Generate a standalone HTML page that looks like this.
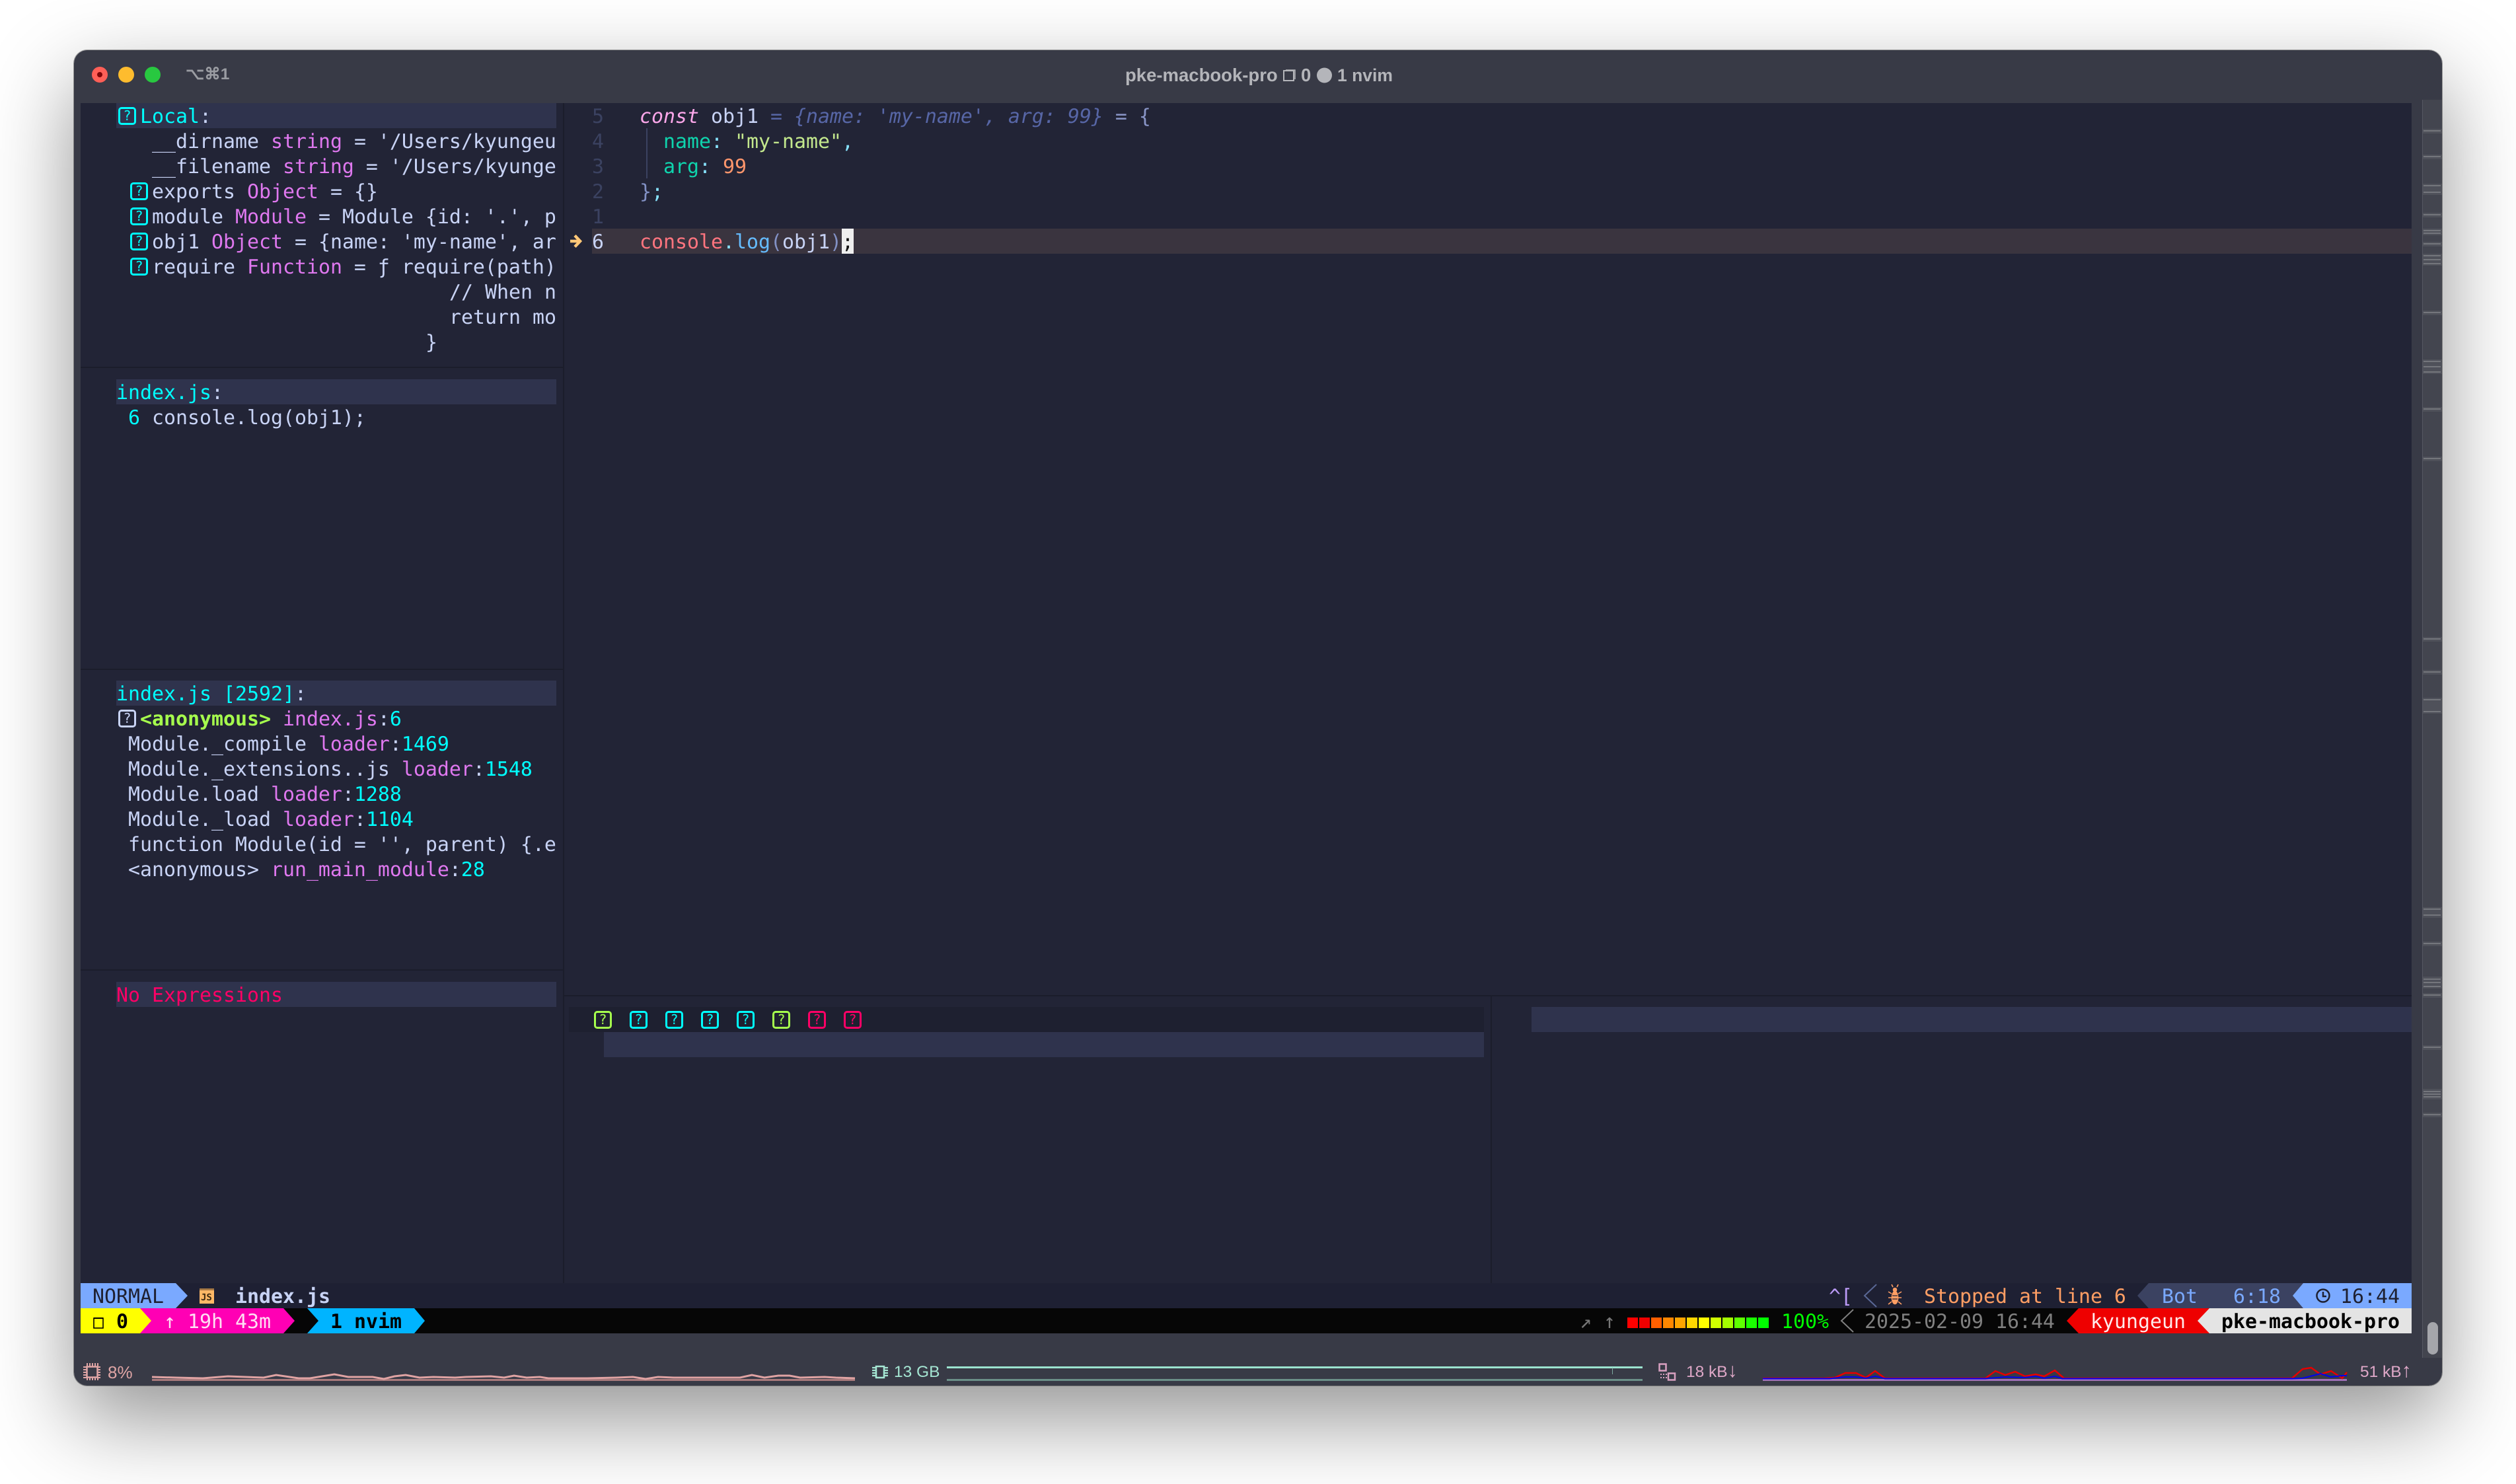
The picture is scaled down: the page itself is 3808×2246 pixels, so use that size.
<!DOCTYPE html>
<html>
<head>
<meta charset="utf-8">
<style>
html,body{margin:0;padding:0;width:3808px;height:2246px;background:#fff;overflow:hidden}
#shadow{position:absolute;left:112px;top:76px;width:3584px;height:2021px;border-radius:20px;box-shadow:0 50px 130px 2px rgba(0,0,0,.42),0 0 0 1px rgba(0,0,0,.35)}
#win{position:absolute;left:0;top:0;width:3808px;height:2246px;clip-path:inset(76px 112px 149px 112px round 20px)}
svg.bg{position:absolute;left:0;top:0}
.t{position:absolute;height:38px;margin-top:2px;line-height:38px;font-family:"DejaVu Sans Mono","Liberation Mono",monospace;font-size:29.9px;white-space:pre;color:#c8d3f5;text-rendering:geometricPrecision}
.c{color:#00ffff}.p{color:#df78ef}.g{color:#a6ff4d;font-weight:bold}
.n{color:#3b4261}.tl{color:#0fd4ad}.op{color:#86e1fc}.s{color:#c3e88d}.o{color:#ff966c}
.v{color:#5766a6;font-style:italic}
.box{position:absolute;width:21px;height:21px;border:3px solid #00ffff;border-radius:5px;color:#00ffff;font:20px/21px "DejaVu Sans Mono",monospace;text-align:center}
.sb{position:absolute;height:30px;line-height:30px;font-family:"Liberation Sans",sans-serif;font-size:24.5px;white-space:pre}
.sb span{font-size:30px;line-height:26px}
.ti{position:absolute;height:34px;line-height:34px;font-family:"Liberation Sans",sans-serif;font-weight:bold;font-size:27.5px;white-space:pre;color:#b4b5ba}
</style>
</head>
<body>
<div id="shadow"></div>
<div id="win">
<svg class="bg" width="3808" height="2246" viewBox="0 0 3808 2246" xmlns="http://www.w3.org/2000/svg">
<rect x="112" y="76" width="3584" height="2021" fill="#383a46"/>
<rect x="122" y="156" width="3528" height="1786" fill="#222436"/>
<!-- highlights -->
<rect x="176" y="156" width="666" height="38" fill="#2f334d"/>
<rect x="176" y="574" width="666" height="38" fill="#2f334d"/>
<rect x="176" y="1030" width="666" height="38" fill="#2f334d"/>
<rect x="176" y="1486" width="666" height="38" fill="#2f334d"/>
<!-- cursor line -->
<rect x="896" y="346" width="2754" height="38" fill="#3a343f"/>
<rect x="1274" y="346" width="18" height="38" fill="#eeeeee"/>
<!-- indent guide -->
<rect x="978" y="194" width="2" height="76" fill="#3b4261"/>
<!-- dividers -->
<rect x="852" y="156" width="2" height="1786" fill="#1b1d2b"/>
<rect x="122" y="555" width="730" height="2" fill="#1b1d2b"/>
<rect x="122" y="1012" width="730" height="2" fill="#1b1d2b"/>
<rect x="122" y="1467" width="730" height="2" fill="#1b1d2b"/>
<rect x="854" y="1506" width="2796" height="2" fill="#1b1d2b"/>
<rect x="2256" y="1508" width="2" height="434" fill="#1b1d2b"/>
<!-- bottom panes -->
<rect x="861" y="1524" width="1385" height="38" fill="#1e2030"/>
<rect x="914" y="1562" width="1332" height="38" fill="#2f334d"/>
<rect x="2318" y="1524" width="1332" height="38" fill="#2f334d"/>
<!-- status rows -->
<rect x="122" y="1942" width="3528" height="38" fill="#1e2033"/>
<rect x="122" y="1980" width="3528" height="38" fill="#060606"/>
<polygon points="122,1942 266,1942 284,1961 266,1980 122,1980" fill="#7aa9ff"/>
<!-- js icon -->
<rect x="302" y="1950" width="22" height="23" fill="#ffb866"/>
<rect x="302" y="1950" width="22" height="3" fill="#a87a45"/>
<polygon points="3252,1942 3490,1942 3490,1980 3252,1980 3235,1961" fill="#3b4261"/>
<polygon points="3486,1942 3650,1942 3650,1980 3486,1980 3470,1961" fill="#7aa9ff"/>
<polyline points="2840,1944 2822,1961 2840,1978" fill="none" stroke="#5a6896" stroke-width="2"/>
<polyline points="2805,1982 2787,1999 2805,2016" fill="none" stroke="#808080" stroke-width="2"/>
<!-- tmux left -->
<polygon points="212,1980 429,1980 446,1999 429,2018 212,2018" fill="#ff00b4"/>
<polygon points="122,1980 212,1980 229,1999 212,2018 122,2018" fill="#ffff00"/>
<polygon points="465,1980 627,1980 643,1999 627,2018 465,2018 482,1999" fill="#00b4ff"/>
<rect x="142" y="1995" width="14" height="15" fill="none" stroke="#000" stroke-width="1.6"/>
<rect x="142" y="1994" width="14" height="2" fill="#000"/>
<!-- tmux right -->
<polygon points="3146,1980 3350,1980 3350,2018 3146,2018 3128,1999" fill="#ee0000"/>
<polygon points="3344,1980 3650,1980 3650,2018 3344,2018 3326,1999" fill="#e4e4e4"/>
<g>
<rect x="2463" y="1994" width="16" height="16" fill="#ff0000"/>
<rect x="2481" y="1994" width="16" height="16" fill="#f00000"/>
<rect x="2499" y="1994" width="16" height="16" fill="#ff5f00"/>
<rect x="2517" y="1994" width="16" height="16" fill="#ff8700"/>
<rect x="2535" y="1994" width="16" height="16" fill="#ffa500"/>
<rect x="2553" y="1994" width="16" height="16" fill="#ffd700"/>
<rect x="2571" y="1994" width="16" height="16" fill="#ffff00"/>
<rect x="2589" y="1994" width="16" height="16" fill="#d0ff00"/>
<rect x="2607" y="1994" width="16" height="16" fill="#a5ff00"/>
<rect x="2625" y="1994" width="16" height="16" fill="#5fff00"/>
<rect x="2643" y="1994" width="16" height="16" fill="#1aff00"/>
<rect x="2661" y="1994" width="16" height="16" fill="#00ff00"/>
</g>
<!-- arrow sign -->
<path d="M863 365H877M870 356.5L878 365L870 373.5" fill="none" stroke="#ffc777" stroke-width="4.5"/>
<!-- bug icon -->
<g fill="none" stroke="#ff9e64" stroke-width="1.6">
<ellipse cx="2868" cy="1964" rx="4.5" ry="9.5" fill="#ff9e64"/>
<circle cx="2868" cy="1952" r="2.5" fill="#ff9e64"/>
<path d="M2865 1948l-2-4M2871 1948l2-4M2863 1958l-5-3M2873 1958l5-3M2863 1964h-5M2873 1964h5M2863 1970l-5 4M2873 1970l5 4"/>
<path d="M2864 1961h8M2864 1966h8" stroke="#1e2033" stroke-width="1.2"/>
</g>
<!-- clock icon -->
<circle cx="3516" cy="1961" r="9.5" fill="none" stroke="#1e2030" stroke-width="2.5"/>
<path d="M3516 1955v7h5" fill="none" stroke="#1e2030" stroke-width="2.5"/>
<!-- scrollbar -->
<rect x="3666" y="151" width="30" height="1904" fill="#43454f"/>
<rect x="3666" y="151" width="1" height="1904" fill="#565862"/>
<g fill="#4f515a">
<rect x="3667" y="195" width="29" height="7"/><rect x="3667" y="234" width="29" height="7"/><rect x="3667" y="278" width="29" height="17"/><rect x="3667" y="322" width="29" height="7"/><rect x="3667" y="346" width="29" height="10"/><rect x="3667" y="366" width="29" height="7"/><rect x="3667" y="384" width="29" height="18"/><rect x="3667" y="470" width="29" height="7"/><rect x="3667" y="544" width="29" height="22"/><rect x="3667" y="616" width="29" height="7"/><rect x="3667" y="691" width="29" height="7"/><rect x="3667" y="964" width="29" height="7"/><rect x="3667" y="1014" width="29" height="7"/><rect x="3667" y="1056" width="29" height="24"/><rect x="3667" y="1373" width="29" height="16"/><rect x="3667" y="1425" width="29" height="7"/><rect x="3667" y="1478" width="29" height="18"/><rect x="3667" y="1503" width="29" height="7"/><rect x="3667" y="1582" width="29" height="7"/><rect x="3667" y="1648" width="29" height="16"/><rect x="3667" y="1684" width="29" height="7"/>
</g>
<g fill="#74767c">
<rect x="3668" y="197" width="26" height="2"/><rect x="3668" y="236" width="26" height="2"/><rect x="3668" y="280" width="26" height="2"/><rect x="3668" y="290" width="26" height="2"/><rect x="3668" y="324" width="26" height="2"/><rect x="3668" y="348" width="26" height="2"/><rect x="3668" y="352" width="26" height="2"/><rect x="3668" y="368" width="26" height="2"/><rect x="3668" y="386" width="26" height="2"/><rect x="3668" y="392" width="26" height="2"/><rect x="3668" y="398" width="26" height="2"/><rect x="3668" y="472" width="26" height="2"/><rect x="3668" y="546" width="26" height="2"/><rect x="3668" y="554" width="26" height="2"/><rect x="3668" y="562" width="26" height="2"/><rect x="3668" y="618" width="26" height="2"/><rect x="3668" y="693" width="26" height="2"/><rect x="3668" y="966" width="26" height="2"/><rect x="3668" y="1016" width="26" height="2"/><rect x="3668" y="1058" width="26" height="2"/><rect x="3668" y="1076" width="26" height="2"/><rect x="3668" y="1375" width="26" height="2"/><rect x="3668" y="1384" width="26" height="2"/><rect x="3668" y="1427" width="26" height="2"/><rect x="3668" y="1481" width="26" height="2"/><rect x="3668" y="1486" width="26" height="2"/><rect x="3668" y="1492" width="26" height="2"/><rect x="3668" y="1505" width="26" height="2"/><rect x="3668" y="1584" width="26" height="2"/><rect x="3668" y="1651" width="26" height="2"/><rect x="3668" y="1655" width="26" height="2"/><rect x="3668" y="1659" width="26" height="2"/><rect x="3668" y="1686" width="26" height="2"/>
</g>
<rect x="3674" y="2001" width="16" height="49" rx="8" fill="#a5a6ab"/>
<!-- traffic lights -->
<circle cx="151" cy="113" r="12" fill="#ff5f57"/><circle cx="151" cy="113" r="4" fill="#7e0508"/>
<circle cx="191" cy="113" r="12" fill="#febc2e"/>
<circle cx="231" cy="113" r="12" fill="#28c840"/>
<!-- title icons -->
<rect x="1943" y="107" width="15" height="15" fill="none" stroke="#b4b5ba" stroke-width="2"/>
<path d="M1946 106h14v14" fill="none" stroke="#b4b5ba" stroke-width="1.5"/>
<circle cx="2004.5" cy="114" r="11.5" fill="#b4b5ba"/>
<!-- CPU icon -->
<g fill="none" stroke="#dfa5a5">
<rect x="131.5" y="2068.5" width="16" height="16" stroke-width="2.5"/>
<path stroke-width="2" d="M132 2063v5M136 2063v5M140 2063v5M144 2063v5M148 2063v5M132 2084v5M136 2084v5M140 2084v5M144 2084v5M148 2084v5M126 2069h5M126 2073h5M126 2077h5M126 2081h5M126 2085h5M147 2069h5M147 2073h5M147 2077h5M147 2081h5M147 2085h5"/>
</g>
<!-- CPU graph -->
<rect x="230" y="2087" width="1064" height="3" fill="#a87a7c"/>
<polyline fill="none" stroke="#e0a3a3" stroke-width="3" points="230,2084 266,2085 307,2086 345,2083 399,2085 418,2081 452,2086 469,2086 506,2080 527,2084 564,2084 581,2087 597,2083 614,2081 635,2085 656,2084 689,2085 705,2084 743,2083 763,2085 778,2082 797,2085 817,2084 830,2086 888,2086 933,2085 958,2084 977,2087 996,2084 1020,2085 1070,2085 1120,2085 1138,2081 1157,2085 1178,2082 1195,2082 1211,2085 1248,2084 1265,2085 1294,2086"/>
<!-- memory icon -->
<g fill="none" stroke="#a5e6d3">
<rect x="1326" y="2068" width="12" height="17" stroke-width="2.5"/>
<path stroke-width="2.2" d="M1320 2070h6M1320 2074h6M1320 2078h6M1320 2082h6M1338 2070h6M1338 2074h6M1338 2078h6M1338 2082h6"/>
</g>
<!-- memory graph -->
<rect x="1433" y="2087" width="1053" height="3" fill="#6b8f88"/>
<rect x="1433" y="2068" width="1053" height="3" fill="#9be3cf"/>
<rect x="2440" y="2070" width="1" height="10" fill="#7da99f"/>
<!-- network icon -->
<g fill="none" stroke="#d8a0c0" stroke-width="2.5">
<rect x="2511.5" y="2064.5" width="10" height="10"/>
<rect x="2525" y="2078.5" width="10" height="10"/>
<path stroke-width="2" stroke-dasharray="2 2" d="M2513 2080h10M2513 2085h10"/>
</g>
<!-- net graph -->
<rect x="2668" y="2087" width="884" height="3" fill="#a070b8"/>
<polyline fill="none" stroke="#e60000" stroke-width="2.5" points="2668,2086 2760,2086 2777,2085 2793,2078 2809,2078 2824,2085 2838,2075 2853,2086 3005,2086 3020,2075 3035,2081 3050,2076 3065,2083 3081,2080 3094,2083 3110,2074 3124,2086 3469,2086 3485,2072 3498,2070 3512,2080 3528,2075 3545,2086 3552,2077"/>
<polyline fill="none" stroke="#0000f0" stroke-width="2" points="2668,2086.5 2769,2086.5 2793,2084 2809,2084 2824,2086 2838,2083 2853,2086.5 3005,2086.5 3035,2084 3063,2085 3081,2083 3094,2086 3110,2083 3121,2086.5 3469,2086.5 3485,2086 3512,2079 3528,2084 3545,2082 3552,2082"/>
</svg>

<!-- Title bar -->
<div class="ti" style="left:281px;top:96px;font-size:24.5px;color:#9a9ca2">⌥⌘1</div>
<div class="ti" style="left:1703px;top:97px">pke-macbook-pro</div>
<div class="ti" style="left:1969px;top:97px">0</div>
<div class="ti" style="left:2024px;top:97px;font-size:26.5px">1 nvim</div>

<!-- Sidebar: scopes -->
<div class="box" style="left:179px;top:162px">?</div>
<div class="t c" style="left:212px;top:156px">Local<span style="color:#c8d3f5">:</span></div>
<div class="t" style="left:230px;top:194px">__dirname <span class="p">string</span> = '/Users/kyungeu</div>
<div class="t" style="left:230px;top:232px">__filename <span class="p">string</span> = '/Users/kyunge</div>
<div class="box" style="left:197px;top:276px">?</div>
<div class="t" style="left:230px;top:270px">exports <span class="p">Object</span> = {}</div>
<div class="box" style="left:197px;top:314px">?</div>
<div class="t" style="left:230px;top:308px">module <span class="p">Module</span> = Module {id: '.', p</div>
<div class="box" style="left:197px;top:352px">?</div>
<div class="t" style="left:230px;top:346px">obj1 <span class="p">Object</span> = {name: 'my-name', ar</div>
<div class="box" style="left:197px;top:390px">?</div>
<div class="t" style="left:230px;top:384px">require <span class="p">Function</span> = ƒ require(path)</div>
<div class="t" style="left:680px;top:422px">// When n</div>
<div class="t" style="left:680px;top:460px">return mo</div>
<div class="t" style="left:644px;top:498px">}</div>

<!-- Sidebar: breakpoints -->
<div class="t c" style="left:176px;top:574px">index.js<span style="color:#c8d3f5">:</span></div>
<div class="t" style="left:194px;top:612px"><span class="c">6</span> console.log(obj1);</div>

<!-- Sidebar: stacks -->
<div class="t c" style="left:176px;top:1030px">index.js [2592]<span style="color:#c8d3f5">:</span></div>
<div class="box" style="left:179px;top:1074px;border-color:#c8d3f5;color:#c8d3f5">?</div>
<div class="t" style="left:212px;top:1068px"><span class="g">&lt;anonymous&gt;</span> <span class="p">index.js</span>:<span class="c">6</span></div>
<div class="t" style="left:194px;top:1106px">Module._compile <span class="p">loader</span>:<span class="c">1469</span></div>
<div class="t" style="left:194px;top:1144px">Module._extensions..js <span class="p">loader</span>:<span class="c">1548</span></div>
<div class="t" style="left:194px;top:1182px">Module.load <span class="p">loader</span>:<span class="c">1288</span></div>
<div class="t" style="left:194px;top:1220px">Module._load <span class="p">loader</span>:<span class="c">1104</span></div>
<div class="t" style="left:194px;top:1258px">function Module(id = '', parent) {.e</div>
<div class="t" style="left:194px;top:1296px">&lt;anonymous&gt; <span class="p">run_main_module</span>:<span class="c">28</span></div>

<!-- Sidebar: expressions -->
<div class="t" style="left:176px;top:1486px;color:#ff0066">No Expressions</div>

<!-- Editor -->
<div class="t n" style="left:896px;top:156px">5</div>
<div class="t n" style="left:896px;top:194px">4</div>
<div class="t n" style="left:896px;top:232px">3</div>
<div class="t n" style="left:896px;top:270px">2</div>
<div class="t n" style="left:896px;top:308px">1</div>
<div class="t" style="left:896px;top:346px">6</div>
<div class="t" style="left:968px;top:156px"><span style="color:#fca7ea;font-style:italic">const</span> obj1 <span class="v">= {name: 'my-name', arg: 99}</span> <span style="color:#8a96c8">= {</span></div>
<div class="t" style="left:1004px;top:194px"><span class="tl">name</span><span class="op">:</span> <span class="s">"my-name"</span><span class="op">,</span></div>
<div class="t" style="left:1004px;top:232px"><span class="tl">arg</span><span class="op">:</span> <span class="o">99</span></div>
<div class="t" style="left:968px;top:270px"><span style="color:#8291c5">}</span><span class="op">;</span></div>
<div class="t" style="left:968px;top:346px"><span style="color:#ff757f">console</span><span class="op">.</span><span style="color:#65bcff">log</span><span style="color:#8291c5">(</span>obj1<span style="color:#8291c5">)</span><span style="color:#111">;</span></div>

<!-- DAP controls -->
<div class="box" style="left:899px;top:1530px;border-color:#a6ff4d;color:#a6ff4d">?</div>
<div class="box" style="left:953px;top:1530px">?</div>
<div class="box" style="left:1007px;top:1530px">?</div>
<div class="box" style="left:1061px;top:1530px">?</div>
<div class="box" style="left:1115px;top:1530px">?</div>
<div class="box" style="left:1169px;top:1530px;border-color:#a6ff4d;color:#a6ff4d">?</div>
<div class="box" style="left:1223px;top:1530px;border-color:#ff0066;color:#ff0066">?</div>
<div class="box" style="left:1277px;top:1530px;border-color:#ff0066;color:#ff0066">?</div>

<!-- Status line -->
<div class="t" style="left:140px;top:1942px;color:#1e2030">NORMAL</div>
<div class="t" style="left:304px;top:1952px;font-size:14px;line-height:20px;height:20px;color:#3b2a10;font-weight:bold">JS</div>
<div class="t" style="left:356px;top:1942px;font-weight:bold">index.js</div>
<div class="t" style="left:2768px;top:1942px;color:#bb9af7">^[</div>
<div class="t" style="left:2912px;top:1942px;color:#ff9e64">Stopped at line 6</div>
<div class="t" style="left:3272px;top:1942px;color:#7aa9ff">Bot</div>
<div class="t" style="left:3380px;top:1942px;color:#7aa9ff">6:18</div>
<div class="t" style="left:3542px;top:1942px;color:#1e2030">16:44</div>

<!-- tmux -->
<div class="t" style="left:176px;top:1980px;color:#000;font-weight:bold">0</div>
<div class="t" style="left:248px;top:1980px;color:#ffdff4">↑ 19h 43m</div>
<div class="t" style="left:500px;top:1980px;color:#000;font-weight:bold">1 nvim</div>
<div class="t" style="left:2391px;top:1980px;color:#777">↗ ↑</div>
<div class="t" style="left:2696px;top:1980px;color:#00ff00">100%</div>
<div class="t" style="left:2822px;top:1980px;color:#808080">2025-02-09 16:44</div>
<div class="t" style="left:3164px;top:1980px;color:#ffe9e9">kyungeun</div>
<div class="t" style="left:3362px;top:1980px;color:#000;font-weight:bold">pke-macbook-pro</div>

<!-- iTerm status bar -->
<div class="sb" style="left:163px;top:2062px;color:#dfa5a5;font-size:26px">8%</div>
<div class="sb" style="left:1353px;top:2062px;color:#a5e6d3">13 GB</div>
<div class="sb" style="left:2552px;top:2062px;color:#dfa8c8">18 kB<span>↓</span></div>
<div class="sb" style="left:3572px;top:2062px;color:#dfa8c8">51 kB<span>↑</span></div>
</div>
</body>
</html>
